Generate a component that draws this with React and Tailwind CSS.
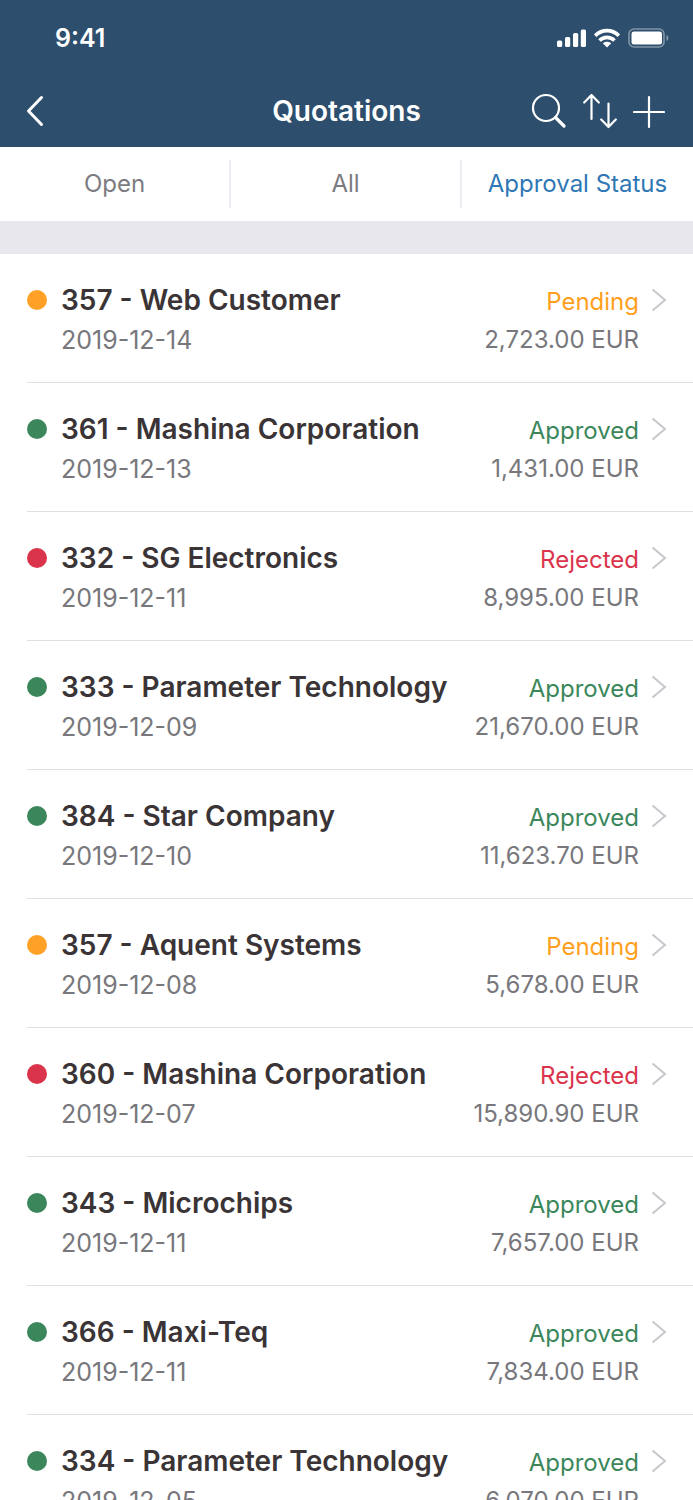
import clsx from "clsx";

const quotations = [
	{ id: 1, title: "357 - Web Customer", date: "2019-12-14", status: "Pending", amount: "2,723.00 EUR" },
	{ id: 2, title: "361 - Mashina Corporation", date: "2019-12-13", status: "Approved", amount: "1,431.00 EUR" },
	{ id: 3, title: "332 - SG Electronics", date: "2019-12-11", status: "Rejected", amount: "8,995.00 EUR" },
	{ id: 4, title: "333 - Parameter Technology", date: "2019-12-09", status: "Approved", amount: "21,670.00 EUR" },
	{ id: 5, title: "384 - Star Company", date: "2019-12-10", status: "Approved", amount: "11,623.70 EUR" },
	{ id: 6, title: "357 - Aquent Systems", date: "2019-12-08", status: "Pending", amount: "5,678.00 EUR" },
	{ id: 7, title: "360 - Mashina Corporation", date: "2019-12-07", status: "Rejected", amount: "15,890.90 EUR" },
	{ id: 8, title: "343 - Microchips", date: "2019-12-11", status: "Approved", amount: "7,657.00 EUR" },
	{ id: 9, title: "366 - Maxi-Teq", date: "2019-12-11", status: "Approved", amount: "7,834.00 EUR" },
	{ id: 10, title: "334 - Parameter Technology", date: "2019-12-05", status: "Approved", amount: "6,070.00 EUR" },
];

const statusStyles = {
	Pending: { dot: "bg-[#ffa126]", text: "text-[#ff9f1c]" },
	Approved: { dot: "bg-[#3b875b]", text: "text-[#3b875b]" },
	Rejected: { dot: "bg-[#da344d]", text: "text-[#da344d]" },
};

const tabs = ["Open", "All", "Approval Status"];

const StatusBar = () => (
	<div className="flex items-center justify-between h-[76px] pl-[55px] pr-6">
		<span className="text-[25px] leading-8 font-semibold">9:41</span>
		<div className="flex items-center gap-2">
			<svg width="30" height="20" viewBox="0 0 30 20" fill="currentColor" aria-hidden="true">
				<rect x="1" y="12.5" width="5.2" height="6.5" rx="1.5" />
				<rect x="9" y="9" width="5.2" height="10" rx="1.5" />
				<rect x="17" y="5" width="5.2" height="14" rx="1.5" />
				<rect x="24.8" y="1.5" width="5.2" height="17.5" rx="1.5" />
			</svg>
			<svg width="26" height="20" viewBox="0 0 26 20" fill="none" stroke="currentColor" strokeWidth="3.6" aria-hidden="true">
				<path d="M1.2 7.6C8 .9 18 .9 24.8 7.6" />
				<path d="M5.5 12.5c4.3-4.200 10.700-4.200 15 0" />
				<path d="M13 19.500l-4.200-4.300c2.400-2 6-2 8.400 0z" fill="currentColor" stroke="none" />
			</svg>
			<svg width="41" height="20" viewBox="0 0 41 20" fill="none" aria-hidden="true">
				<rect x="1" y="1" width="35" height="18" rx="5" stroke="currentColor" strokeOpacity=".4" strokeWidth="1.6" />
				<rect x="3.5" y="3.5" width="30.5" height="13" rx="2.5" fill="currentColor" />
				<path d="M38.5 7c2.4 1 2.4 5 0 6z" fill="currentColor" fillOpacity=".45" />
			</svg>
		</div>
	</div>
);

const NavBar = () => (
	<header className="grid grid-cols-[1fr_auto_1fr] items-center h-[71px] px-7 pb-0.5">
		<button type="button" aria-label="Back" className="justify-self-start">
			<svg width="18" height="36" viewBox="4 0 18 36" fill="none" stroke="currentColor" strokeWidth="3" strokeLinecap="round" strokeLinejoin="round" className="overflow-visible">
				<path d="M17.5 4.5L4.500 18l13 13.500" />
			</svg>
		</button>
		<h1 className="text-[28px] leading-9 font-semibold">Quotations</h1>
		<div className="flex items-center gap-4 justify-self-end">
			<button type="button" aria-label="Search">
				<svg width="36" height="36" viewBox="0 0 36 36" fill="none" stroke="currentColor" strokeLinecap="round">
					<circle cx="15" cy="15" r="13" strokeWidth="2.2" />
					<path d="M24.5 24.5L33 33" strokeWidth="3.2" />
				</svg>
			</button>
			<button type="button" aria-label="Sort">
				<svg width="34" height="36" viewBox="0 0 34 36" fill="none" stroke="currentColor" strokeWidth="2.2" strokeLinecap="round" strokeLinejoin="round">
					<path d="M8.5 26V2M1.200 9.500L8.500 2l7.300 7.500" />
					<path d="M25.500 10.500V34M18.200 26.500l7.300 7.500 7.300-7.500" />
				</svg>
			</button>
			<button type="button" aria-label="Add quotation">
				<svg width="32" height="36" viewBox="0 0 32 36" fill="none" stroke="currentColor" strokeWidth="2.2" strokeLinecap="round">
					<path d="M16 4v30M1 19h30" />
				</svg>
			</button>
		</div>
	</header>
);

const FilterTabs = ({ active }) => (
	<nav className="grid grid-cols-3 divide-x-2 divide-[#ececf2] py-[13px] bg-white">
		{tabs.map((tab) => (
			<button
				key={tab}
				type="button"
				aria-pressed={tab === active}
				className={clsx(
					"h-12 text-[24px] leading-8 whitespace-nowrap",
					tab === active ? "text-[#2f77b5]" : "text-[#7b7b80]"
				)}
			>
				{tab}
			</button>
		))}
	</nav>
);

const QuotationRow = ({ quotation }) => {
	const { title, date, status, amount } = quotation;
	const styles = statusStyles[status];

	return (
		<li className="ml-[27px] border-b border-[#dfdfe4]">
			<a href="#" className="flex h-32 pt-7 pr-[26px]">
				<span className={clsx("size-5 mt-2 mr-[14px] rounded-full shrink-0", styles.dot)} />
				<div className="flex-1 min-w-0">
					<h2 className="text-[28px] leading-9 font-semibold text-[#3a3436] truncate">{title}</h2>
					<p className="mt-1 text-[25px] leading-9 text-[#77777c]">{date}</p>
				</div>
				<div className="text-right whitespace-nowrap">
					<p className={clsx("text-[24px] leading-10", styles.text)}>{status}</p>
					<p className="text-[24px] leading-9 text-[#77777c]">{amount}</p>
				</div>
				<svg className="ml-3 mt-1.5 shrink-0" width="16" height="24" viewBox="0 0 16 24" fill="none" stroke="#c7c7cc" strokeWidth="2" aria-hidden="true">
					<path d="M1.500 1.500L14 12 1.500 22.500" />
				</svg>
			</a>
		</li>
	);
};

const App = () => {
	return (
		<div className="flex flex-col h-screen bg-white font-['Inter',sans-serif]">
			<div className="bg-[#2d4f6d] text-white shrink-0">
				<StatusBar />
				<NavBar />
			</div>
			<FilterTabs active="Approval Status" />
			<main className="flex-1 min-h-0 overflow-y-auto [scrollbar-width:none]">
				<div className="h-[33px] bg-[#e8e7ed]" />
				<ul>
					{quotations.map((quotation) => (
						<QuotationRow key={quotation.id} quotation={quotation} />
					))}
				</ul>
			</main>
		</div>
	);
};

export default App;
